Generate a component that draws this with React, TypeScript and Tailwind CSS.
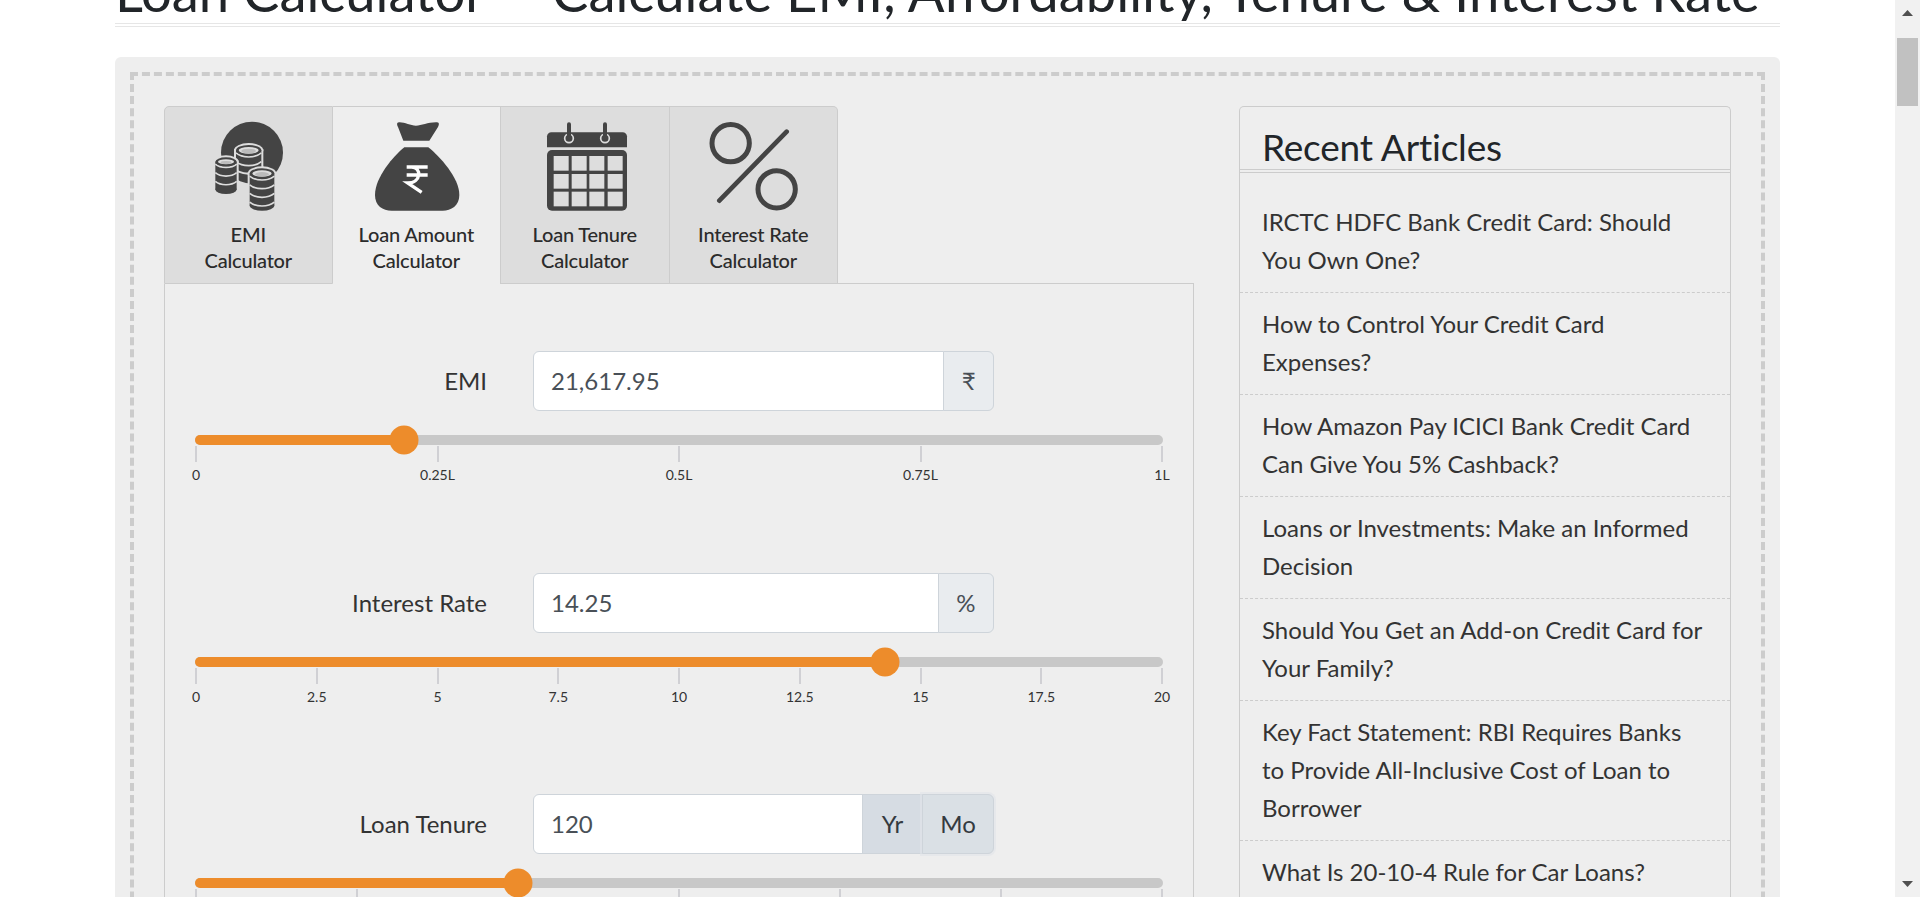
const TABS = [
  { first: 'EMI', second: 'Calculator', active: false },
  { first: 'Loan Amount', second: 'Calculator', active: true },
  { first: 'Loan Tenure', second: 'Calculator', active: false },
  { first: 'Interest Rate', second: 'Calculator', active: false },
];

const ARTICLES = [
  'IRCTC HDFC Bank Credit Card: Should You Own One?',
  'How to Control Your Credit Card Expenses?',
  'How Amazon Pay ICICI Bank Credit Card Can Give You 5% Cashback?',
  'Loans or Investments: Make an Informed Decision',
  'Should You Get an Add-on Credit Card for Your Family?',
  'Key Fact Statement: RBI Requires Banks to Provide All-Inclusive Cost of Loan to Borrower',
  'What Is 20-10-4 Rule for Car Loans?',
];

const SLIDERS = [
  { label: 'EMI', value: '21,617.95', percent: 21.62, ticks: ['0', '0.25L', '0.5L', '0.75L', '1L'], suffix: '₹' },
  {
    label: 'Interest Rate',
    value: '14.25',
    percent: 71.25,
    ticks: ['0', '2.5', '5', '7.5', '10', '12.5', '15', '17.5', '20'],
    suffix: '%',
  },
  { label: 'Loan Tenure', value: '120', percent: 33.33, ticks: ['0', '5', '10', '15', '20', '25', '30'], suffix: null },
];

function CoinStack({ cx, top, bottom, rx }: { cx: number; top: number; bottom: number; rx: number }) {
  const ry = rx * 0.42;
  const bands = [];
  for (let y = top + ry * 1.5; y < bottom - ry - 4; y += 26) {
    bands.push(y);
  }
  return (
    <g>
      <rect x={cx - rx - 6} y={top + ry - 4} width={rx * 2 + 12} height={bottom - top - ry * 1.6} fill="#ddd" />
      <ellipse cx={cx} cy={top + ry} rx={rx + 6} ry={ry + 6} fill="#ddd" />
      <ellipse cx={cx} cy={bottom - ry} rx={rx + 6} ry={ry + 6} fill="#ddd" />
      <rect x={cx - rx} y={top + ry} width={rx * 2} height={bottom - top - ry * 2} fill="#444" />
      <ellipse cx={cx} cy={bottom - ry} rx={rx} ry={ry} fill="#444" />
      {bands.map((y) => (
        <path
          key={y}
          d={`M${cx - rx} ${y}C${cx - rx * 0.5} ${y + ry} ${cx + rx * 0.5} ${y + ry} ${cx + rx} ${y}`}
          fill="none"
          stroke="#ddd"
          strokeWidth="5"
        />
      ))}
      <ellipse cx={cx} cy={top + ry} rx={rx} ry={ry} fill="#444" />
      <ellipse cx={cx} cy={top + ry} rx={rx - 8} ry={ry - 6} fill="#ddd" />
      <ellipse cx={cx} cy={top + ry + 2} rx={rx - 16} ry={ry - 9} fill="#bbb" />
    </g>
  );
}

function EmiIcon() {
  return (
    <svg width="90" height="90" viewBox="0 0 270 270">
      <circle cx="147" cy="95" r="93" fill="#444" />
      <CoinStack cx={137} top={72} bottom={155} rx={38} />
      <CoinStack cx={69} top={109} bottom={219} rx={32} />
      <CoinStack cx={177} top={142} bottom={269} rx={37} />
    </svg>
  );
}

function BagIcon() {
  return (
    <svg width="90" height="90" viewBox="0 0 270 270">
      <path
        d="M84 4C100 3 118 14 135 14C152 14 172 3 198 4C206 5 204 12 201 18L175 59H97L81 18C78 12 76 5 84 4Z"
        fill="#444"
      />
      <path
        d="M100 79H172C205 105 265 170 265 222C265 255 240 269 215 269H62C35 269 12 255 12 222C12 170 67 105 100 79Z"
        fill="#444"
      />
      <path
        d="M107 138H170M107 162H170M122 138C152 138 152 186 110 186L152 214"
        fill="none"
        stroke="#fff"
        strokeWidth="10"
      />
    </svg>
  );
}

function CalendarIcon() {
  const cols = [41, 95, 148, 203];
  const rows = [105, 159, 212];
  return (
    <svg width="90" height="90" viewBox="0 0 270 270">
      <path d="M21 79V46C21 39 27 34 34 34H248C255 34 261 39 261 46V79Z" fill="#444" />
      <rect x="21" y="87" width="240" height="182" rx="15" fill="#444" />
      {rows.map((y) => cols.map((x) => <rect key={`${x}-${y}`} x={x} y={y} width="45" height="44" fill="#ddd" />))}
      {[87, 195].map((x) => (
        <g key={x}>
          <circle cx={x} cy="52" r="13" fill="none" stroke="#ddd" strokeWidth="5" />
          <rect x={x - 6} y="4" width="12" height="52" rx="6" fill="#444" />
        </g>
      ))}
    </svg>
  );
}

function PercentIcon() {
  return (
    <svg width="90" height="90" viewBox="0 0 270 270">
      <circle cx="68" cy="66.5" r="56" fill="none" stroke="#444" strokeWidth="15" />
      <circle cx="206" cy="205" r="56" fill="none" stroke="#444" strokeWidth="15" />
      <path d="M236 32L34 239" fill="none" stroke="#444" strokeWidth="14" strokeLinecap="round" />
    </svg>
  );
}

const ICONS = [EmiIcon, BagIcon, CalendarIcon, PercentIcon];

function TabStrip() {
  return (
    <div className="flex">
      {TABS.map((tab, i) => {
        const Icon = ICONS[i];
        return (
          <div
            key={tab.first}
            className={`flex h-[178px] w-[168.5px] flex-col items-center border-t border-r border-[#ccc] pt-[14px] ${
              tab.active ? 'bg-[#eee]' : 'border-b bg-[#ddd]'
            } ${i === 0 ? 'rounded-tl-[5px] border-l' : ''} ${i === 3 ? 'rounded-tr-[5px]' : ''}`}
          >
            <Icon />
            <div className="mt-[10px] text-center text-[20px] leading-[26px] font-medium tracking-[-0.2px] text-[#2b2b2b]">
              <div>{tab.first}</div>
              <div>{tab.second}</div>
            </div>
          </div>
        );
      })}
      <div className="flex-1 border-b border-[#ccc]" />
    </div>
  );
}

function SliderRow({ slider }: { slider: (typeof SLIDERS)[number] }) {
  return (
    <div className="h-[221.5px]">
      <div className="flex items-center">
        <label className="w-[292px] text-right text-[24px] text-[#333]">{slider.label}</label>
        <div className="ml-[46px] flex h-[60px] w-[461px]">
          <div className="flex min-w-0 flex-1 items-center rounded-l-[6px] border border-[#ced4da] bg-white pl-[17px] text-[24px] text-[#495057]">
            {slider.value}
          </div>
          {slider.suffix ? (
            <div className="-ml-px flex items-center rounded-r-[6px] border border-[#ced4da] bg-[#e9ecef] px-[17.5px] text-[24px] text-[#495057]">
              {slider.suffix}
            </div>
          ) : (
            <>
              <div className="-ml-px flex w-[61px] items-center justify-center border border-[#ced4da] bg-[#d6dce3] text-[24px] text-[#343a40]">
                Yr
              </div>
              <div className="-ml-px flex w-[72px] items-center justify-center rounded-r-[6px] border border-[#ced4da] bg-[#dae0e5] text-[24px] text-[#343a40] shadow-[0_0_0_2px_rgba(225,229,233,0.6)]">
                Mo
              </div>
            </>
          )}
        </div>
      </div>
      <div className="relative mt-[24px] h-[10px] rounded-[5px] bg-[#c8c8c8]">
        <div className="h-full rounded-l-[5px] bg-[#ed8c2b]" style={{ width: `${slider.percent}%` }} />
        <div
          className="absolute top-1/2 h-[29px] w-[29px] -translate-x-1/2 -translate-y-1/2 rounded-full bg-[#ed8c2b]"
          style={{ left: `${slider.percent}%` }}
        />
      </div>
      <div className="mt-px flex justify-between">
        {slider.ticks.map((tick) => (
          <div key={tick} className="flex w-[2px] flex-col items-center">
            <div className="h-[16px] w-[2px] shrink-0 bg-[#d0d0d4]" />
            <div className="mt-[5px] text-[14px] leading-[16px] whitespace-nowrap text-[#333]">{tick}</div>
          </div>
        ))}
      </div>
    </div>
  );
}

function RecentArticles() {
  return (
    <div className="w-[492px] rounded-t-[5px] border-x border-t border-[#ccc]">
      <h3 className="h-[66px] border-b-4 border-double border-[#ccc] pt-[18px] pl-[22px] text-[37px] leading-[44px] font-normal tracking-[-0.2px] text-[#212529]">
        Recent Articles
      </h3>
      <ul className="pt-[18px]">
        {ARTICLES.map((article) => (
          <li
            key={article}
            className="border-b border-dashed border-[#ccc] pt-[12px] pr-[25px] pb-[13px] pl-[22px] text-[24px] leading-[38px] text-[#333]"
          >
            {article}
          </li>
        ))}
      </ul>
    </div>
  );
}

function FakeScrollbar() {
  return (
    <div className="flex w-[25px] flex-col items-center bg-[#f1f1f1]">
      <svg className="mt-[10px]" width="11" height="6" viewBox="0 0 11 6">
        <path d="M5.5 0L11 6H0Z" fill="#505050" />
      </svg>
      <div className="mt-[22px] h-[68px] w-[21px] bg-[#c1c1c1]" />
      <svg className="mt-auto mb-[10px]" width="11" height="6" viewBox="0 0 11 6">
        <path d="M0 0H11L5.5 6Z" fill="#505050" />
      </svg>
    </div>
  );
}

export default function App() {
  return (
    <div className="flex h-[897px] overflow-hidden bg-white font-[Lato,sans-serif]">
      <div className="flex-1 px-[115px]">
        <h1 className="-mt-[40px] h-[67px] border-b-4 border-double border-[#e6e6e6] text-[54.4px] leading-[63px] font-normal whitespace-nowrap text-[#212529]">
          Loan Calculator<span className="inline-block w-[67px]" />Calculate EMI, Affordability, Tenure &amp; Interest Rate
        </h1>
        <div className="mt-[30px] rounded-[6px] bg-[#eee] p-[15px]">
          <div className="flex justify-between border-4 border-dashed border-[#ccc] pt-[30px] pr-[30px] pl-[30px]">
            <div className="w-[1030px]">
              <TabStrip />
              <div className="border-x border-[#ccc] px-[30px] pt-[67px]">
                {SLIDERS.map((slider) => (
                  <SliderRow key={slider.label} slider={slider} />
                ))}
              </div>
            </div>
            <RecentArticles />
          </div>
        </div>
      </div>
      <FakeScrollbar />
    </div>
  );
}
